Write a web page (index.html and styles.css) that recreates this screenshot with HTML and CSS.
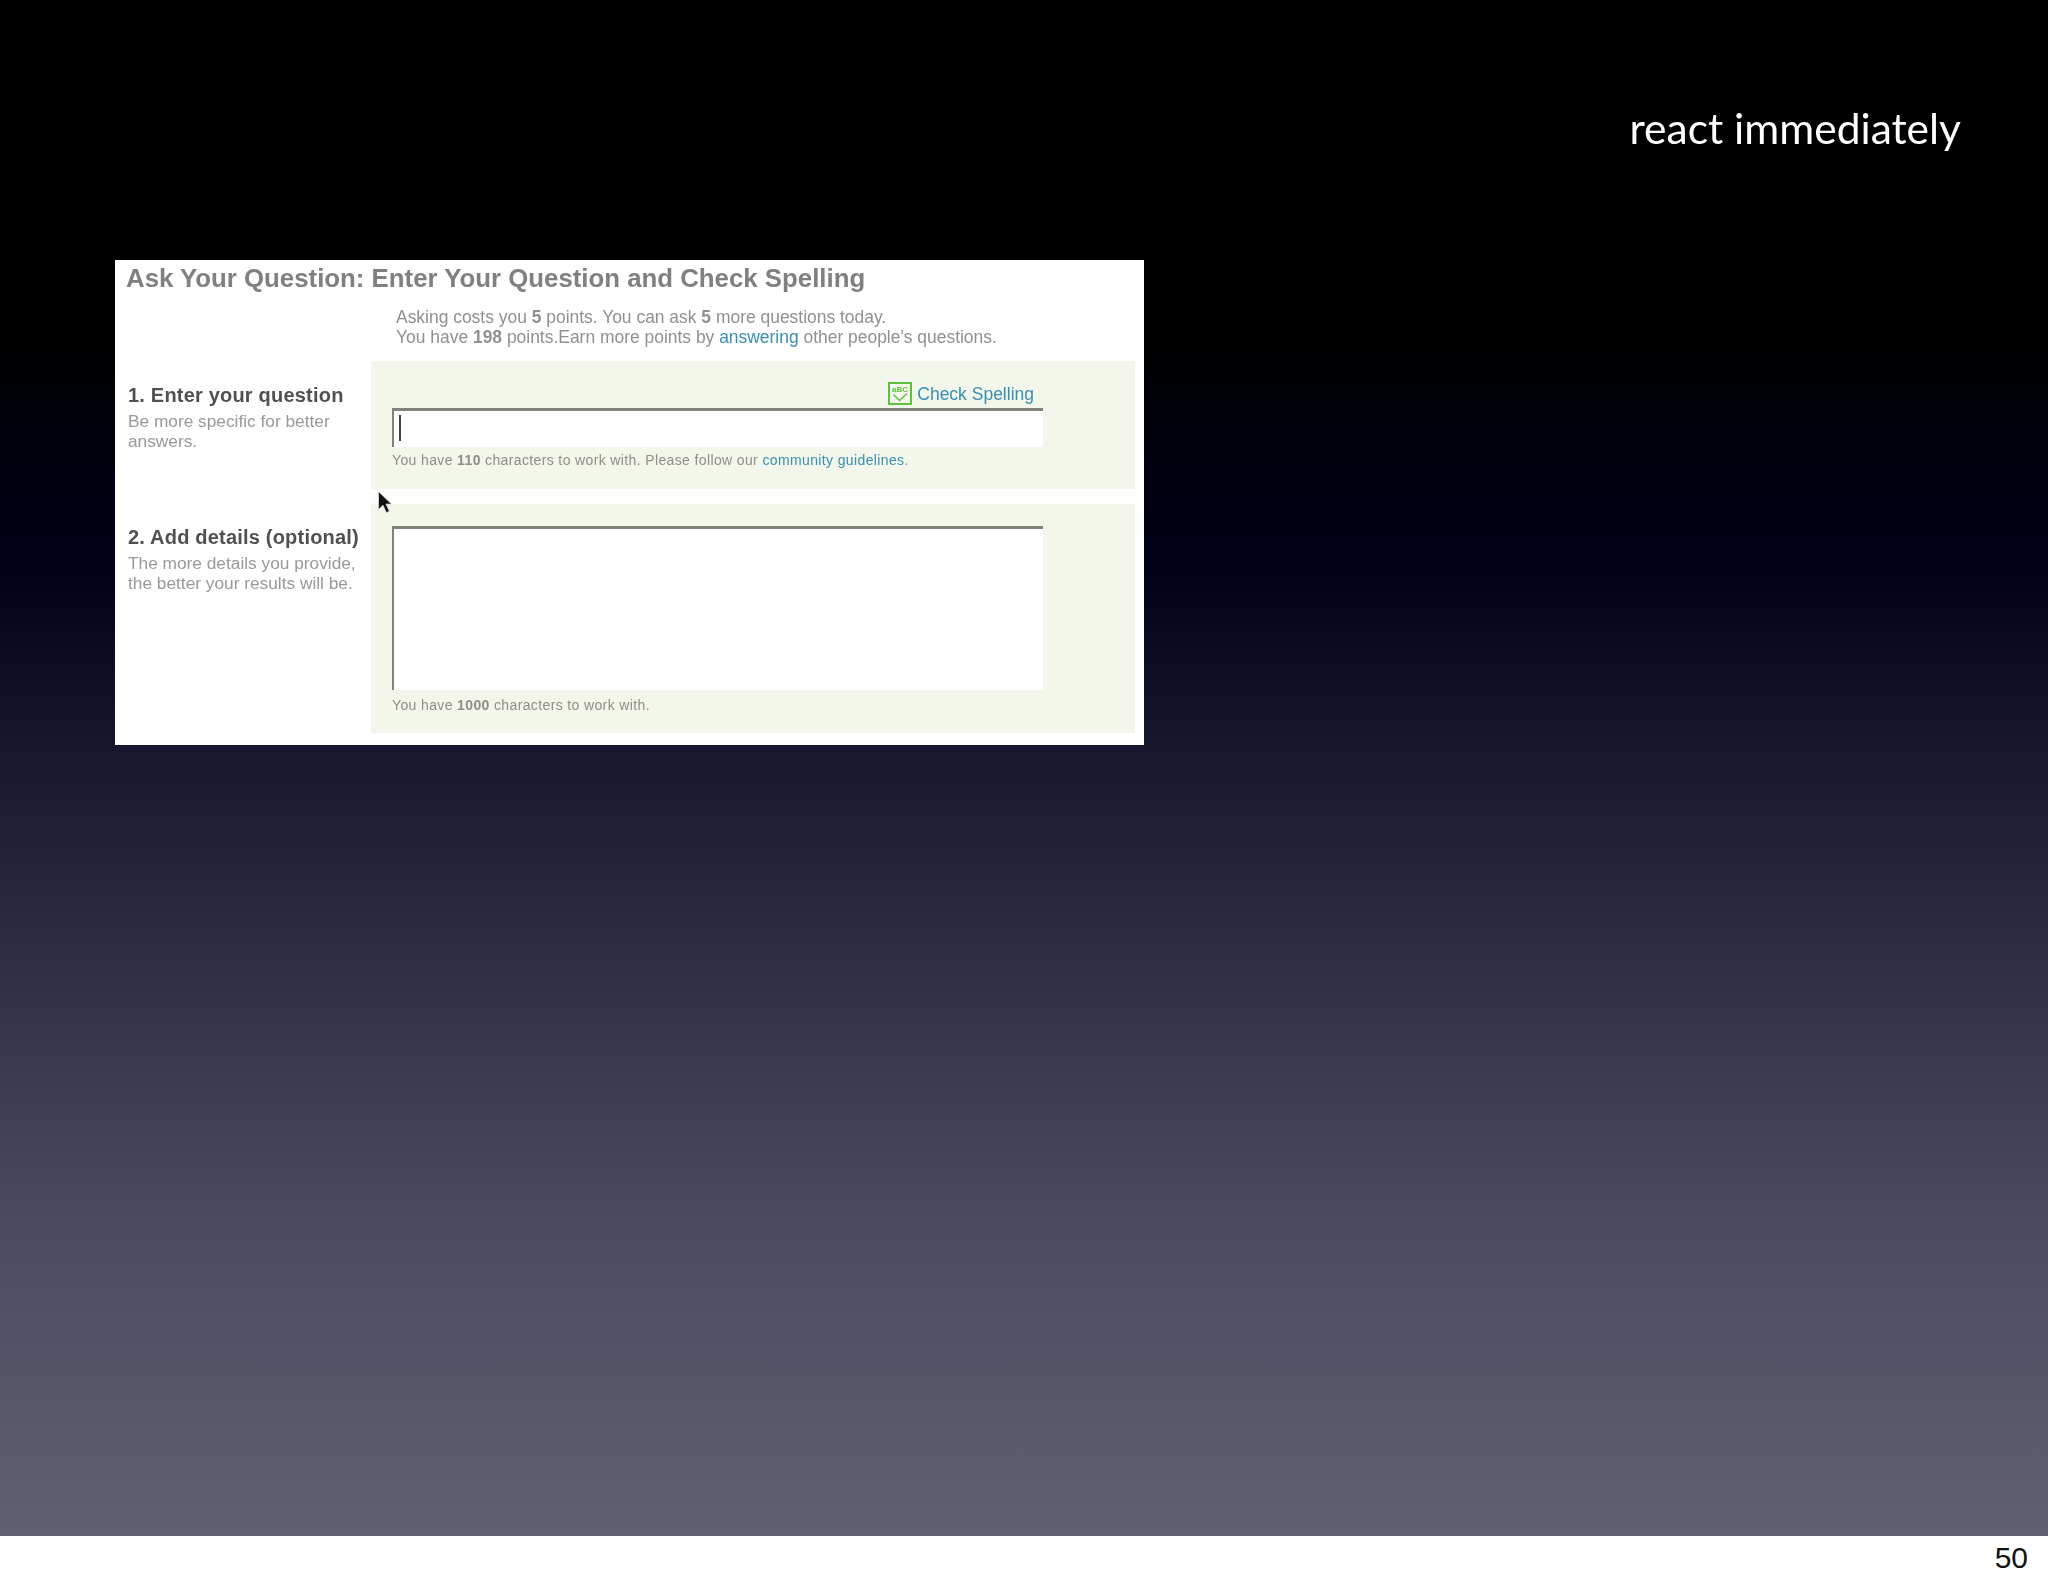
FILE: index.html
```html
<!DOCTYPE html>
<html lang="en">

<head>
    <meta charset="utf-8">
    <title>react immediately</title>
    <link rel="stylesheet" href="styles.css">
</head>

<body>
    <div class="slide">
        <div class="slide-title">react immediately</div>
        <div class="shot">
            <h1 class="shot-title">Ask Your Question: Enter Your Question and Check Spelling</h1>
            <p class="intro">
                Asking costs you <b>5</b> points. You can ask <b>5</b> more questions today.<br>
                You have <b>198</b> points.Earn more points by <a class="link">answering</a> other people's questions.
            </p>

            <div class="row">
                <div class="label">
                    <h2 class="first">1. Enter your question</h2>
                    <p>Be more specific for better<br>answers.</p>
                </div>
                <div class="field field-one">
                    <div class="spell">
                        <svg class="spell-icon" width="24" height="23" viewBox="0 0 24 23">
                            <rect x="1" y="1" width="22" height="21" fill="#f6f8ee" stroke="#5cc040" stroke-width="2"/>
                            <text x="12" y="10" text-anchor="middle" class="spell-abc">aBC</text>
                            <path d="M5.5 12.5l6 6 7.5-7" fill="none" stroke="#5cc040" stroke-width="1.4"/>
                        </svg>
                        <a class="link">Check Spelling</a>
                    </div>
                    <div class="box box-one"><span class="caret"></span></div>
                    <p class="hint">You have <b>110</b> characters to work with. Please follow our <a class="link">community guidelines</a>.</p>
                </div>
            </div>

            <div class="row">
                <div class="label">
                    <h2 class="second">2. Add details (optional)</h2>
                    <p>The more details you provide,<br>the better your results will be.</p>
                </div>
                <div class="field field-two">
                    <div class="box box-two"></div>
                    <p class="hint">You have <b>1000</b> characters to work with.</p>
                </div>
            </div>

            <!-- 마우스 커서 -->
            <svg class="pointer" width="16" height="25" viewBox="0 0 16 24">
                <path d="M1.5 1v18l4.5-4.2 3.4 7.4 3-1.4-3.4-7.2h5.6z" fill="#111" stroke="#ddd" stroke-width=".8"/>
            </svg>
        </div>
    </div>
    <div class="footer">50</div>
</body>

</html>
```

FILE: styles.css
```css
body {
    margin: 0;
    font-family: "Liberation Sans", Arial, sans-serif;
    background: #fff;
}

.slide {
    height: 1536px;
    padding-top: 103px;
    box-sizing: border-box;
    background: linear-gradient(to bottom, #000 0, #000 330px, #01011a 570px, #1a1a32 780px, #32324a 1000px, #4a4a62 1220px, #606072 1536px);
}

.slide-title {
    height: 50px;
    padding-right: 87px;
    text-align: right;
    font-family: Lato, sans-serif;
    font-size: 42.5px;
    line-height: 50px;
    color: #fff;
    filter: blur(0.4px);
}

.shot {
    position: relative;
    width: 1029px;
    height: 485px;
    margin-top: 107px;
    margin-left: 115px;
    padding-top: 4px;
    box-sizing: border-box;
    background: #fff;
    filter: blur(0.7px);
    color: #909090;
}

.shot-title {
    margin: 0 0 0 11px;
    font-size: 25.8px;
    line-height: 28px;
    font-weight: bold;
    color: #808080;
}

.intro {
    margin: 15px 0 14px 281px;
    font-size: 17.45px;
    line-height: 20px;
}

.row {
    display: grid;
    grid-template-columns: 256px 764px;
}

.label {
    padding-left: 13px;
}

.label h2 {
    margin: 0 0 6px;
    font-size: 20px;
    line-height: 20px;
    letter-spacing: 0.2px;
    color: #505050;
}

.label h2.first {
    margin-top: 24px;
}

.label h2.second {
    margin-top: 23px;
}

.label p {
    margin: 0;
    font-size: 17.3px;
    line-height: 20px;
    color: #999;
    white-space: nowrap;
}

.field {
    padding-left: 21px;
    background: #f3f6ea;
}

.field-one {
    height: 128px;
    padding-top: 21px;
    box-sizing: border-box;
    margin-bottom: 15px;
    box-shadow: 0 15px 0 #fdfef9;
}

.field-two {
    height: 229px;
    padding-top: 22px;
    box-sizing: border-box;
}

.spell {
    display: flex;
    align-items: center;
    justify-content: flex-end;
    gap: 5px;
    width: 642px;
    height: 23px;
    margin-bottom: 3px;
    font-size: 17.5px;
}

.spell .link {
    margin-top: 2px;
}

.spell-abc {
    font-family: "Liberation Sans", sans-serif;
    font-size: 8px;
    font-weight: bold;
    fill: #5cc040;
}

.spell-icon {
    flex: none;
}

.box {
    width: 651px;
    box-sizing: border-box;
    background: #fff;
    border-top: 3px solid #808378;
    border-left: 2px solid #808378;
}

.box-one {
    height: 39px;
    padding: 4px 0 0 5px;
}

.box-two {
    height: 164px;
}

.caret {
    display: block;
    width: 2px;
    height: 26px;
    background: #444;
}

.hint {
    margin: 5px 0 0;
    font-size: 14px;
    line-height: 16px;
    letter-spacing: 0.37px;
    color: #8e8e88;
}

.field-two .hint {
    margin-top: 7px;
}

.link {
    color: #3a8fb0;
}

.pointer {
    position: absolute;
    left: 262px;
    top: 230px;
}

.footer {
    height: 51px;
    padding-right: 20px;
    text-align: right;
    font-size: 30px;
    line-height: 44px;
    color: #111;
}
```
